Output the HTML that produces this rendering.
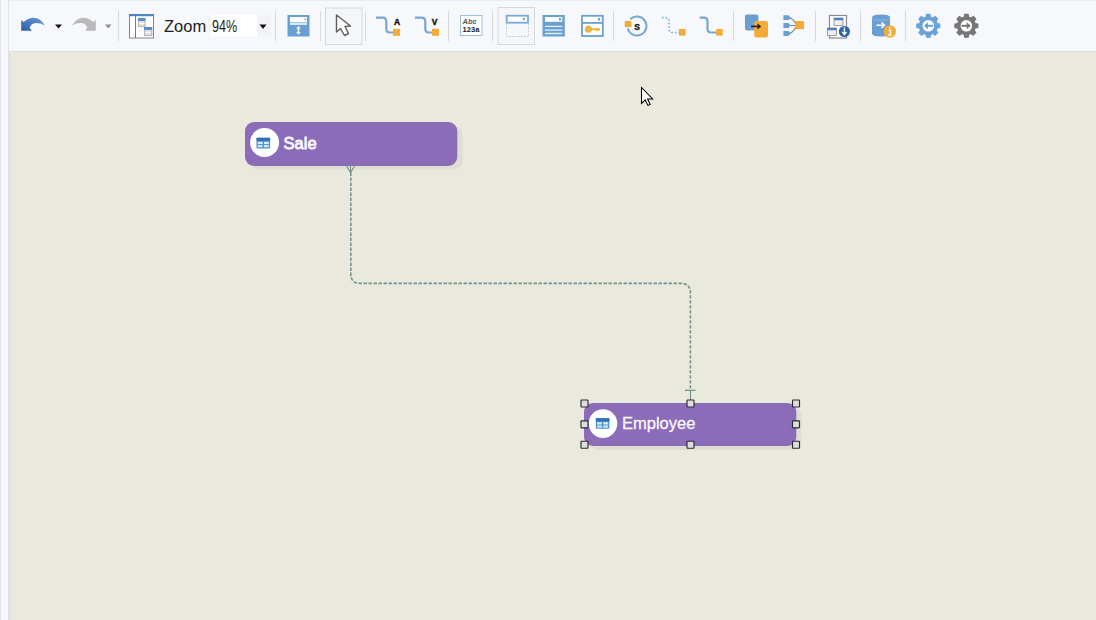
<!DOCTYPE html>
<html><head><meta charset="utf-8">
<style>
html,body{margin:0;padding:0;width:1096px;height:620px;overflow:hidden;background:#e8e8dc;font-family:"Liberation Sans",sans-serif;}
#left{position:absolute;left:0;top:0;width:9px;height:620px;background:#f7f8fb;}
#left .l0{position:absolute;left:0;top:0;width:1px;height:620px;background:#e3e6e9;}
#left .l8{position:absolute;left:8px;top:0;width:1px;height:620px;background:#e0e4e8;}
#tb{position:absolute;left:9px;top:0;width:1087px;height:51px;background:#f6f8fb;}
#tbtop{position:absolute;left:9px;top:0;width:1087px;height:1px;background:#e9edf2;}
#tbbot{position:absolute;left:9px;top:51px;width:1087px;height:1px;background:#dcdfe3;}
#cvl{position:absolute;left:9px;top:52px;width:1px;height:568px;background:#d9dee4;}
#canvas{position:absolute;left:10px;top:52px;width:1086px;height:568px;background:#e9e9dd;}
svg{position:absolute;left:0;top:0;}
.t{position:absolute;white-space:nowrap;}
</style></head><body>
<div id="left"><div class="l0"></div><div class="l8"></div></div>
<div id="tb"></div><div id="tbtop"></div><div id="tbbot"></div><div id="cvl"></div>
<div id="canvas"></div>
<div class="t" style="left:164px;top:18px;font-size:16.5px;line-height:17px;color:#1e1e1e;">Zoom</div>
<div style="position:absolute;left:211px;top:15px;width:60px;height:21px;background:#fff;"></div>
<div style="position:absolute;left:257px;top:15px;width:14px;height:21px;background:#f1f3f6;"></div>
<div class="t" style="left:212px;top:18px;font-size:16.5px;line-height:17px;color:#1e1e1e;transform:scaleX(0.76);transform-origin:0 0;">94%</div>
<svg width="1096" height="620" viewBox="0 0 1096 620">
<!-- separators -->
<g fill="#d6dade">
<rect x="118" y="11" width="1" height="30"/>
<rect x="275" y="11" width="1" height="30"/>
<rect x="320" y="11" width="1" height="30"/>
<rect x="365" y="11" width="1" height="30"/>
<rect x="448" y="11" width="1" height="30"/>
<rect x="492" y="11" width="1" height="30"/>
<rect x="613" y="11" width="1" height="30"/>
<rect x="733" y="11" width="1" height="30"/>
<rect x="815" y="11" width="1" height="30"/>
<rect x="860" y="11" width="1" height="30"/>
<rect x="905" y="11" width="1" height="30"/>
</g>
<!-- undo -->
<defs><linearGradient id="ug" x1="0" y1="1" x2="1" y2="0"><stop offset="0" stop-color="#2c60aa"/><stop offset="1" stop-color="#6a9ad6"/></linearGradient></defs><path d="M21.2,20.1 L23.8,22 C26.5,19.5 30,17.8 33.5,17.8 C38,17.8 42,20.5 44.7,25.6 C41.5,23.5 38,22.8 34.5,23.2 C32,23.6 30.5,25.5 29.7,27.8 L31.9,30.8 L21.2,30.8 Z" fill="url(#ug)"/>
<path d="M55,24.5 L62,24.5 L58.5,28.5 Z" fill="#111"/>
<g transform="translate(117,0) scale(-1,1)"><path d="M21.2,20.1 L23.8,22 C26.5,19.5 30,17.8 33.5,17.8 C38,17.8 42,20.5 44.7,25.6 C41.5,23.5 38,22.8 34.5,23.2 C32,23.6 30.5,25.5 29.7,27.8 L31.9,30.8 L21.2,30.8 Z" fill="#b9b9b9"/></g>
<path d="M105,24.5 L111.5,24.5 L108.25,28.5 Z" fill="#909090"/>
<!-- layout icon -->
<rect x="129.5" y="14.5" width="24" height="23.5" fill="#fff" stroke="#858585" stroke-width="1"/>
<rect x="129" y="14" width="25" height="2.2" fill="#4f84c4"/>
<rect x="135" y="16" width="1" height="22" fill="#7a7a7a"/>
<rect x="138.3" y="18.3" width="6.8" height="8.2" fill="#e2e2e2" stroke="#9a9a9a" stroke-width="0.7"/>
<rect x="138" y="18" width="7.3" height="3" fill="#5a8fcd"/>
<rect x="139" y="23" width="5.5" height="1" fill="#fff"/>
<rect x="144.3" y="27.3" width="7.6" height="8.2" fill="#e2e2e2" stroke="#9a9a9a" stroke-width="0.7"/>
<rect x="144" y="27" width="8.1" height="3" fill="#5a8fcd"/>
<rect x="145" y="32" width="6" height="1" fill="#fff"/>
<!-- zoom dropdown arrow -->
<path d="M259.5,24.5 L266.5,24.5 L263,29 Z" fill="#111"/>

<!-- auto height icon -->
<rect x="287.5" y="15" width="22" height="21.5" fill="#6a9fd4"/>
<rect x="290" y="17" width="17" height="5" fill="#fff"/>
<rect x="290" y="22.5" width="17" height="2.5" fill="#d6e9f8"/>
<path d="M304,18.5 h2.5 l-1.25,2 z" fill="#6a9fd4"/>
<path d="M298.5,26 l-2.3,2.5 h1.5 v3.5 h-1.5 l2.3,2.8 l2.3,-2.8 h-1.5 v-3.5 h1.5 z" fill="#fff"/>
<!-- pointer button -->
<rect x="325.5" y="8" width="36.5" height="36.5" fill="#f4f6f9" stroke="#d6d9dc" stroke-width="1"/>
<path d="M336.5,15 L336.5,32 L340.5,28.5 L344.5,35.5 L348.5,33.5 L345,26.5 L350.5,26 Z" fill="#fff" stroke="#5e5e5e" stroke-width="1.4" stroke-linejoin="round"/>
<!-- connector A -->
<path d="M376,17.6 H382.5 Q386.3,17.6 386.3,21.4 V28.7 Q386.3,32.5 390,32.5 H394" fill="none" stroke="#7aa6d2" stroke-width="2.2"/>
<rect x="393" y="28.8" width="7" height="7" fill="#f5ab38"/>
<text x="397" y="25" font-family="Liberation Sans" font-weight="bold" font-size="8.5" text-anchor="middle" fill="#111" stroke="#111" stroke-width="0.4">A</text>
<g transform="translate(39,0)">
<path d="M376,17.6 H382.5 Q386.3,17.6 386.3,21.4 V28.7 Q386.3,32.5 390,32.5 H394" fill="none" stroke="#7aa6d2" stroke-width="2.2"/>
<rect x="393" y="28.8" width="7" height="7" fill="#f5ab38"/>
</g>
<text x="434.5" y="25" font-family="Liberation Sans" font-weight="bold" font-size="8.5" text-anchor="middle" fill="#111" stroke="#111" stroke-width="0.4">V</text>
<!-- Abc icon -->
<rect x="460.5" y="15.5" width="21.5" height="20" fill="#fff" stroke="#9dc0e2" stroke-width="1"/>
<text x="462.5" y="24" font-family="Liberation Sans" font-weight="bold" font-style="italic" font-size="7.5" fill="#555">Abc</text>
<text x="462.5" y="32.4" font-family="Liberation Sans" font-weight="bold" font-size="7.5" fill="#222" textLength="17">123a</text>
<!-- toggled button header-only -->
<rect x="498" y="7.5" width="36.5" height="37" fill="#f4f6f9" stroke="#d6d9dc" stroke-width="1"/>
<rect x="506.7" y="15.7" width="21.3" height="7" fill="#fff" stroke="#78a9d8" stroke-width="1.8"/>
<rect x="523" y="18" width="2" height="2" fill="#6b9fd0"/>
<path d="M506.5,24 V36.5 H528.5 V24" fill="none" stroke="#c6c6c6" stroke-width="1" stroke-dasharray="1.5,1.5"/>
<!-- table lines icon -->
<rect x="542.5" y="15" width="22.3" height="21.5" fill="#6a9fd2"/>
<rect x="545" y="17" width="17.3" height="4.8" fill="#fff"/>
<rect x="559" y="18" width="2" height="2.5" fill="#6a9fd2"/>
<rect x="545" y="25.8" width="17.3" height="1.2" fill="#e8f4fb"/>
<rect x="545" y="29.5" width="17.3" height="1.2" fill="#e8f4fb"/>
<rect x="545" y="32.8" width="17.3" height="1.4" fill="#e8f4fb"/>
<!-- key icon -->
<rect x="582" y="15.8" width="20.8" height="20.2" fill="#fff" stroke="#6a9fd2" stroke-width="1.8"/>
<rect x="582" y="22" width="20.8" height="1.8" fill="#6a9fd2"/>
<rect x="598" y="18" width="2" height="2.5" fill="#6a9fd2"/>
<circle cx="588.4" cy="29.2" r="3.6" fill="#e4b648"/>
<rect x="590" y="28.2" width="9.5" height="2" fill="#e4b648"/>
<rect x="596" y="28.2" width="1.3" height="3" fill="#e4b648"/>
<rect x="598.3" y="28.2" width="1.3" height="3" fill="#e4b648"/>
<!-- self relation -->
<path d="M630.3,19.3 A9.5,9.5 0 1 1 627.8,28.5" fill="none" stroke="#77a6d4" stroke-width="2"/>
<rect x="624.8" y="20.9" width="6.6" height="6.2" fill="#f5ab38"/>
<text x="637.2" y="30" font-family="Liberation Sans" font-weight="bold" font-size="8.5" text-anchor="middle" fill="#111" stroke="#111" stroke-width="0.3">S</text>
<!-- dotted connector -->
<path d="M662,17.6 H665 Q669,17.6 669,21.5 V28.5 Q669,32.5 673,32.5 H680" fill="none" stroke="#7aa6d2" stroke-width="1.6" stroke-dasharray="1.5,2"/>
<rect x="679" y="29" width="6.6" height="6.6" fill="#f5ab38"/>
<!-- solid connector -->
<path d="M699.8,17.6 H704 Q707.5,17.6 707.5,21.4 V28.7 Q707.5,32.5 711,32.5 H717" fill="none" stroke="#7aa6d2" stroke-width="2.2"/>
<rect x="716.2" y="29" width="6.6" height="6.6" fill="#f5ab38"/>
<!-- move icon -->
<rect x="745" y="14.6" width="13.4" height="16" rx="2" fill="#6a9fd4"/>
<rect x="754.2" y="21" width="13.8" height="16.4" rx="2" fill="#f5ab38"/>
<path d="M751,26.4 H759" stroke="#222" stroke-width="1.6"/>
<path d="M757.5,23.3 L761.3,26.4 L757.5,29.5 Z" fill="#222"/>
<!-- merge icon -->
<path d="M783.4,15.3 H788.5 L790.6,17.7 L788.5,20.1 H783.4 Z M783.4,23.1 H788.5 L790.6,25.5 L788.5,27.9 H783.4 Z M783.4,31 H788.5 L790.6,33.5 L788.5,36 H783.4 Z" fill="#6a9fd4"/>
<path d="M789.5,17.7 Q793,18.5 795.8,23.5 M790.5,25.5 H795.8 M789.5,33.5 Q793,32.5 795.8,27" fill="none" stroke="#7d7d7d" stroke-width="1.1"/>
<rect x="795.3" y="21" width="8.7" height="8.2" fill="#f5ab38"/>
<!-- export image icon -->
<rect x="829.5" y="15.5" width="17" height="22.5" fill="#fff" stroke="#8a8a8a" stroke-width="1.2"/>
<rect x="834" y="18" width="9" height="7.5" fill="#eee" stroke="#888" stroke-width="0.8"/>
<rect x="834" y="18" width="9" height="2.2" fill="#4a7fc0"/>
<rect x="827.5" y="28" width="9" height="7.5" fill="#eee" stroke="#888" stroke-width="0.8"/>
<rect x="827.5" y="28" width="9" height="2.2" fill="#4a7fc0"/>
<circle cx="844.4" cy="31.5" r="5.6" fill="#2e67ab"/>
<path d="M844.4,27.5 V34 M842.3,32 L844.4,34.5 L846.5,32" fill="none" stroke="#fff" stroke-width="1.3"/>
<!-- db icon -->
<path d="M872,17.5 Q872,14.6 881,14.6 Q890,14.6 890,17.5 V33.5 Q890,36.5 881,36.5 Q872,36.5 872,33.5 Z" fill="#6a9fd4"/>
<path d="M872,17.5 Q872,20.3 881,20.3 Q890,20.3 890,17.5" fill="none" stroke="#8db8e2" stroke-width="0.9"/>
<path d="M876.5,25.3 H884 M881.5,22.5 L884.5,25.3 L881.5,28" fill="none" stroke="#fff" stroke-width="1.5"/>
<circle cx="889.8" cy="31.5" r="6.2" fill="#f5ab38"/>
<path d="M889.8,27.3 v1.5 M888.6,30.3 h1.8 v4.6 M888.2,35 h3.3" fill="none" stroke="#fff" stroke-width="1.4"/>
<!-- gears -->
<path d="M926.49,14.34 L930.11,14.34 L930.40,17.05 L933.00,18.13 L935.12,16.42 L937.68,18.98 L935.97,21.10 L937.05,23.70 L939.76,23.99 L939.76,27.61 L937.05,27.90 L935.97,30.50 L937.68,32.62 L935.12,35.18 L933.00,33.47 L930.40,34.55 L930.11,37.26 L926.49,37.26 L926.20,34.55 L923.60,33.47 L921.48,35.18 L918.92,32.62 L920.63,30.50 L919.55,27.90 L916.84,27.61 L916.84,23.99 L919.55,23.70 L920.63,21.10 L918.92,18.98 L921.48,16.42 L923.60,18.13 L926.20,17.05 Z" fill="#6aa2d8" stroke="#6aa2d8" stroke-width="1.2" stroke-linejoin="round"/><circle cx="928.3" cy="25.8" r="5.8" fill="#fff"/><path d="M926.8,25.8 H933.1" stroke="#6aa2d8" stroke-width="2"/><path d="M924.0,25.8 L928.0,22.3 L928.0,29.3 Z" fill="#6aa2d8"/>
<path d="M964.59,14.34 L968.21,14.34 L968.50,17.05 L971.10,18.13 L973.22,16.42 L975.78,18.98 L974.07,21.10 L975.15,23.70 L977.86,23.99 L977.86,27.61 L975.15,27.90 L974.07,30.50 L975.78,32.62 L973.22,35.18 L971.10,33.47 L968.50,34.55 L968.21,37.26 L964.59,37.26 L964.30,34.55 L961.70,33.47 L959.58,35.18 L957.02,32.62 L958.73,30.50 L957.65,27.90 L954.94,27.61 L954.94,23.99 L957.65,23.70 L958.73,21.10 L957.02,18.98 L959.58,16.42 L961.70,18.13 L964.30,17.05 Z" fill="#767676" stroke="#767676" stroke-width="1.2" stroke-linejoin="round"/><circle cx="966.4" cy="25.8" r="5.8" fill="#fff"/><path d="M961.6,25.8 H967.9" stroke="#767676" stroke-width="2"/><path d="M970.7,25.8 L966.7,22.3 L966.7,29.3 Z" fill="#767676"/>
<!-- Sale -->
<rect x="250" y="125.5" width="212.5" height="44" rx="9" fill="#dedfd2"/>
<rect x="245" y="122" width="212.3" height="44" rx="9" fill="#8a6cb8"/>
<circle cx="264.6" cy="142.6" r="14.5" fill="#fff"/>
<g transform="translate(256.5,137.8)">
<rect x="0" y="0" width="13.6" height="10.6" rx="0.8" fill="#4b92d2"/>
<rect x="0" y="0" width="13.6" height="3" fill="#2f70b3"/>
<rect x="1.3" y="4" width="4.8" height="2.3" fill="#d8ecfa"/>
<rect x="7.5" y="4" width="4.8" height="2.3" fill="#d8ecfa"/>
<rect x="1.3" y="7.3" width="4.8" height="2.1" fill="#d8ecfa"/>
<rect x="7.5" y="7.3" width="4.8" height="2.1" fill="#d8ecfa"/>
</g>
<text x="283.6" y="148.6" font-family="Liberation Sans" font-size="16.5" fill="#fbf8ff" stroke="#fbf8ff" stroke-width="0.8">Sale</text>
<!-- Employee -->
<rect x="589" y="406.5" width="212.5" height="43.5" rx="9" fill="#dedfd2"/>
<rect x="584" y="403" width="212.3" height="43" rx="9" fill="#8a6cb8"/>
<circle cx="603" cy="423.6" r="14.3" fill="#fff"/>
<g transform="translate(595.8,418.2)">
<rect x="0" y="0" width="13.6" height="10.6" rx="0.8" fill="#4b92d2"/>
<rect x="0" y="0" width="13.6" height="3" fill="#2f70b3"/>
<rect x="1.3" y="4" width="4.8" height="2.3" fill="#d8ecfa"/>
<rect x="7.5" y="4" width="4.8" height="2.3" fill="#d8ecfa"/>
<rect x="1.3" y="7.3" width="4.8" height="2.1" fill="#d8ecfa"/>
<rect x="7.5" y="7.3" width="4.8" height="2.1" fill="#d8ecfa"/>
</g>
<text x="622" y="429.4" font-family="Liberation Sans" font-size="16.5" fill="#fbf8ff" stroke="#fbf8ff" stroke-width="0.3">Employee</text>
<!-- connector -->
<path d="M350.8,172.5 V274 Q350.8,283.4 360.2,283.4 H681 Q690.4,283.4 690.4,292.8 V390.4" fill="none" stroke="#73948f" stroke-width="1.6" stroke-dasharray="3.4,1.6"/>
<path d="M350.5,166 V173 M346.6,166 L350.5,172.6 L354.6,166 M690.5,390 V400 M685,390.4 H695.5" fill="none" stroke="#6f908b" stroke-width="1.1"/>
<rect x="581.0" y="400.0" width="7" height="7" fill="#dedede" stroke="#2c2c2c" stroke-width="1.15" rx="0.5"/><rect x="687.0" y="400.0" width="7" height="7" fill="#dedede" stroke="#2c2c2c" stroke-width="1.15" rx="0.5"/><rect x="792.5" y="400.0" width="7" height="7" fill="#dedede" stroke="#2c2c2c" stroke-width="1.15" rx="0.5"/>
<rect x="581.0" y="420.8" width="7" height="7" fill="#dedede" stroke="#2c2c2c" stroke-width="1.15" rx="0.5"/><rect x="792.5" y="420.8" width="7" height="7" fill="#dedede" stroke="#2c2c2c" stroke-width="1.15" rx="0.5"/>
<rect x="581.0" y="441.2" width="7" height="7" fill="#dedede" stroke="#2c2c2c" stroke-width="1.15" rx="0.5"/><rect x="687.0" y="441.2" width="7" height="7" fill="#dedede" stroke="#2c2c2c" stroke-width="1.15" rx="0.5"/><rect x="792.5" y="441.2" width="7" height="7" fill="#dedede" stroke="#2c2c2c" stroke-width="1.15" rx="0.5"/>
<!-- mouse cursor -->
<path d="M641.5,87.5 L641.5,103.5 L645.2,99.9 L647.9,105.4 L650.2,104.4 L647.6,99 L652.6,99 Z" fill="#fff" stroke="#000" stroke-width="1.05" stroke-linejoin="miter"/>
</svg>
</body></html>
